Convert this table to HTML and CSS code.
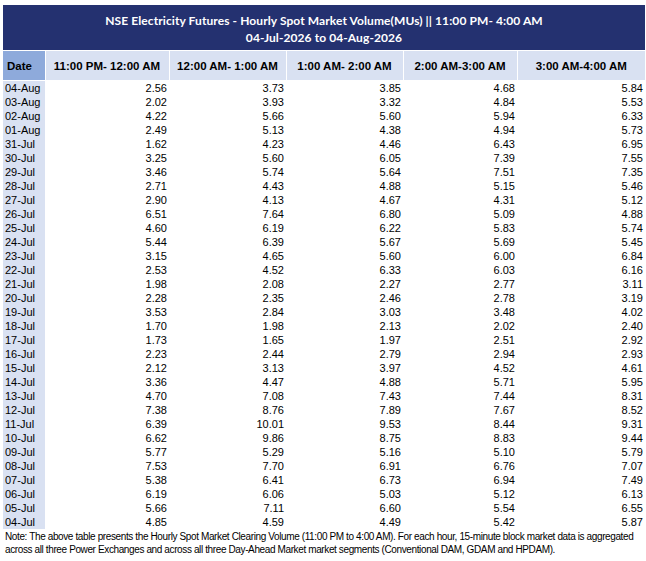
FILE: index.html
```html
<!DOCTYPE html>
<html>
<head>
<meta charset="utf-8">
<link rel="stylesheet" href="styles.css">
</head>
<body>
<div class="sheet">
  <div class="title">
    <div>NSE Electricity Futures - Hourly Spot Market Volume(MUs) || 11:00 PM- 4:00 AM</div>
    <div>04-Jul-2026 to 04-Aug-2026</div>
  </div>
  <table class="grid">
    <colgroup>
      <col class="c-date"><col class="c1"><col class="c2"><col class="c3"><col class="c4"><col class="c5">
    </colgroup>
    <thead>
      <tr>
        <th class="h-date">Date</th>
        <th>11:00 PM- 12:00 AM</th>
        <th>12:00 AM- 1:00 AM</th>
        <th>1:00 AM- 2:00 AM</th>
        <th>2:00 AM-3:00 AM</th>
        <th>3:00 AM-4:00 AM</th>
      </tr>
    </thead>
    <tbody>
      <tr><td>04-Aug</td><td>2.56</td><td>3.73</td><td>3.85</td><td>4.68</td><td>5.84</td></tr>
      <tr><td>03-Aug</td><td>2.02</td><td>3.93</td><td>3.32</td><td>4.84</td><td>5.53</td></tr>
      <tr><td>02-Aug</td><td>4.22</td><td>5.66</td><td>5.60</td><td>5.94</td><td>6.33</td></tr>
      <tr><td>01-Aug</td><td>2.49</td><td>5.13</td><td>4.38</td><td>4.94</td><td>5.73</td></tr>
      <tr><td>31-Jul</td><td>1.62</td><td>4.23</td><td>4.46</td><td>6.43</td><td>6.95</td></tr>
      <tr><td>30-Jul</td><td>3.25</td><td>5.60</td><td>6.05</td><td>7.39</td><td>7.55</td></tr>
      <tr><td>29-Jul</td><td>3.46</td><td>5.74</td><td>5.64</td><td>7.51</td><td>7.35</td></tr>
      <tr><td>28-Jul</td><td>2.71</td><td>4.43</td><td>4.88</td><td>5.15</td><td>5.46</td></tr>
      <tr><td>27-Jul</td><td>2.90</td><td>4.13</td><td>4.67</td><td>4.31</td><td>5.12</td></tr>
      <tr><td>26-Jul</td><td>6.51</td><td>7.64</td><td>6.80</td><td>5.09</td><td>4.88</td></tr>
      <tr><td>25-Jul</td><td>4.60</td><td>6.19</td><td>6.22</td><td>5.83</td><td>5.74</td></tr>
      <tr><td>24-Jul</td><td>5.44</td><td>6.39</td><td>5.67</td><td>5.69</td><td>5.45</td></tr>
      <tr><td>23-Jul</td><td>3.15</td><td>4.65</td><td>5.60</td><td>6.00</td><td>6.84</td></tr>
      <tr><td>22-Jul</td><td>2.53</td><td>4.52</td><td>6.33</td><td>6.03</td><td>6.16</td></tr>
      <tr><td>21-Jul</td><td>1.98</td><td>2.08</td><td>2.27</td><td>2.77</td><td>3.11</td></tr>
      <tr><td>20-Jul</td><td>2.28</td><td>2.35</td><td>2.46</td><td>2.78</td><td>3.19</td></tr>
      <tr><td>19-Jul</td><td>3.53</td><td>2.84</td><td>3.03</td><td>3.48</td><td>4.02</td></tr>
      <tr><td>18-Jul</td><td>1.70</td><td>1.98</td><td>2.13</td><td>2.02</td><td>2.40</td></tr>
      <tr><td>17-Jul</td><td>1.73</td><td>1.65</td><td>1.97</td><td>2.51</td><td>2.92</td></tr>
      <tr><td>16-Jul</td><td>2.23</td><td>2.44</td><td>2.79</td><td>2.94</td><td>2.93</td></tr>
      <tr><td>15-Jul</td><td>2.12</td><td>3.13</td><td>3.97</td><td>4.52</td><td>4.61</td></tr>
      <tr><td>14-Jul</td><td>3.36</td><td>4.47</td><td>4.88</td><td>5.71</td><td>5.95</td></tr>
      <tr><td>13-Jul</td><td>4.70</td><td>7.08</td><td>7.43</td><td>7.44</td><td>8.31</td></tr>
      <tr><td>12-Jul</td><td>7.38</td><td>8.76</td><td>7.89</td><td>7.67</td><td>8.52</td></tr>
      <tr><td>11-Jul</td><td>6.39</td><td>10.01</td><td>9.53</td><td>8.44</td><td>9.31</td></tr>
      <tr><td>10-Jul</td><td>6.62</td><td>9.86</td><td>8.75</td><td>8.83</td><td>9.44</td></tr>
      <tr><td>09-Jul</td><td>5.77</td><td>5.29</td><td>5.16</td><td>5.10</td><td>5.79</td></tr>
      <tr><td>08-Jul</td><td>7.53</td><td>7.70</td><td>6.91</td><td>6.76</td><td>7.07</td></tr>
      <tr><td>07-Jul</td><td>5.38</td><td>6.41</td><td>6.73</td><td>6.94</td><td>7.49</td></tr>
      <tr><td>06-Jul</td><td>6.19</td><td>6.06</td><td>5.03</td><td>5.12</td><td>6.13</td></tr>
      <tr><td>05-Jul</td><td>5.66</td><td>7.11</td><td>6.60</td><td>5.54</td><td>6.55</td></tr>
      <tr><td>04-Jul</td><td>4.85</td><td>4.59</td><td>4.49</td><td>5.42</td><td>5.87</td></tr>
    </tbody>
  </table>
  <p class="note">Note: The above table presents the Hourly Spot Market Clearing Volume (11:00 PM to 4:00 AM). For each hour, 15-minute block market data is aggregated across all three Power Exchanges and across all three Day-Ahead Market market segments (Conventional DAM, GDAM and HPDAM).</p>
</div>
</body>
</html>
```
FILE: styles.css
```css
html, body {
  margin: 0;
  padding: 0;
  background: #ffffff;
}
body {
  font-family: "Liberation Sans", Arial, sans-serif;
  color: #000000;
}
.sheet {
  width: 642px;
  margin: 5px 0 0 3px;
}
.title {
  background: #243170;
  color: #ffffff;
  font-family: Lato, "Liberation Sans", sans-serif;
  font-weight: bold;
  font-size: 12px;
  letter-spacing: 0.09px;
  line-height: 17px;
  text-align: center;
  height: 45px;
  box-sizing: border-box;
  padding-top: 7px;
  margin-bottom: 1px;
}
.grid {
  width: 642px;
  table-layout: fixed;
  border-collapse: collapse;
  border-spacing: 0;
}
.c-date { width: 42px; }
.c1 { width: 124px; }
.c2 { width: 117px; }
.c3 { width: 117px; }
.c4 { width: 114px; }
.c5 { width: 128px; }
.grid th {
  background: #d9e1f2;
  font-size: 11.5px;
  font-weight: bold;
  height: 29px;
  padding: 0;
  text-align: center;
  border-left: 1px solid #ffffff;
  border-bottom: 1px solid #ffffff;
  white-space: nowrap;
}
.grid th.h-date {
  background: #8eaadb;
  text-align: left;
  padding-left: 4px;
  border-left: none;
}
.grid td {
  font-size: 11px;
  line-height: 14px;
  height: 14px;
  padding: 0 2px 0 0;
  text-align: right;
  white-space: nowrap;
}
.grid td:first-child {
  background: #d9e1f2;
  text-align: left;
  padding: 0 0 0 2px;
}
.note {
  margin: 1px 0 0 2px;
  font-size: 10px;
  letter-spacing: -0.38px;
  line-height: 13px;
}
```
